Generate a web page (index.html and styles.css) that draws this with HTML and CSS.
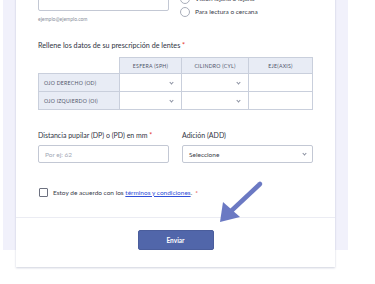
FILE: index.html
```html
<!DOCTYPE html>
<html lang="es">
<head>
  <meta charset="UTF-8" />
  <meta name="viewport" content="width=device-width, initial-scale=1.0" />
  <title>Formulario de lentes</title>
  <link rel="stylesheet" href="styles.css">
</head>
<body>
  <div class="page">
    <div class="page-inner">
      <form class="card">

        <!-- Email + tipo de visión -->
        <div class="two-col">
          <div class="field">
            <label class="field-label">Correo electrónico <span class="req">*</span></label>
            <input class="text-input" type="text">
            <div class="hint">ejemplo@ejemplo.com</div>
          </div>
          <div class="field">
            <label class="field-label">Tipo de visión <span class="req">*</span></label>
            <div class="radio-list">
              <label class="radio"><span class="radio-dot"></span>Visión lejana o lejana</label>
              <label class="radio"><span class="radio-dot"></span>Para lectura o cercana</label>
            </div>
          </div>
        </div>

        <!-- Prescripción -->
        <div class="section-label">Rellene los datos de su prescripción de lentes <span class="req">*</span></div>
        <table class="rx-table">
          <thead>
            <tr>
              <th class="blank"></th>
              <th>Esfera (SPH)</th>
              <th>Cilindro (CYL)</th>
              <th>Eje(axis)</th>
            </tr>
          </thead>
          <tbody>
            <tr>
              <th>Ojo derecho (OD)</th>
              <td class="sel"><span class="chev"></span></td>
              <td class="sel"><span class="chev"></span></td>
              <td></td>
            </tr>
            <tr>
              <th>Ojo izquierdo (OI)</th>
              <td class="sel"><span class="chev"></span></td>
              <td class="sel"><span class="chev"></span></td>
              <td></td>
            </tr>
          </tbody>
        </table>

        <!-- DP + ADD -->
        <div class="two-col row-dp">
          <div class="field">
            <label class="field-label">Distancia pupilar (DP) o (PD) en mm <span class="req">*</span></label>
            <div class="text-input placeholder">Por ej: 62</div>
          </div>
          <div class="field">
            <label class="field-label">Adición (ADD)</label>
            <div class="text-input select">Seleccione<span class="chev"></span></div>
          </div>
        </div>

        <!-- Terms -->
        <label class="terms">
          <span class="checkbox"></span>
          Estoy de acuerdo con los&nbsp;<a href="#">términos y condiciones</a>. <span class="req">*</span>
        </label>

        <div class="card-footer">
          <button type="button" class="btn-send">Enviar</button>
        </div>

        <!-- pointer arrow -->
        <svg class="pointer" width="60" height="50" viewBox="0 0 60 50">
          <line x1="55" y1="4" x2="24" y2="33" stroke="#6b79c3" stroke-width="4.5" stroke-linecap="round"/>
          <polygon points="15,42 18,22 35,37" fill="#6b79c3"/>
        </svg>
      </form>
    </div>
  </div>
</body>
</html>
```

FILE: styles.css
```css
* {
  box-sizing: border-box;
  margin: 0;
  padding: 0;
}

html, body {
  height: 100%;
  background: #ffffff;
  font-family: "Lato", "Open Sans", sans-serif;
  color: #3a3d4a;
  overflow: hidden;
}

.page {
  height: 100%;
  padding-left: 3px;
  width: 348px;
}

.page-inner {
  height: 100%;
  background: #f1f1fb;
  padding: 0 13px;
}

.card {
  position: relative;
  background: #ffffff;
  margin-top: -34px;
  padding: 10px 22px 0;
  box-shadow: 0 1px 2px rgba(60, 70, 120, 0.25);
}

.two-col {
  display: grid;
  grid-template-columns: 131px 131px;
  column-gap: 13px;
}

.field-label {
  display: block;
  font-size: 7px;
  line-height: 12px;
  color: #2f3342;
}

.req {
  color: #e3342f;
}

.text-input {
  display: flex;
  align-items: center;
  width: 100%;
  height: 18px;
  margin-top: 5px;
  border: 1px solid #c3c8d4;
  border-radius: 2px;
  background: #fff;
  padding: 0 6px;
  font-family: inherit;
  font-size: 6.5px;
  color: #3a3d4a;
}

.placeholder {
  color: #a3a8b5;
}

.select {
  justify-content: space-between;
}

.hint {
  margin-top: 5px;
  font-size: 5px;
  line-height: 6px;
  color: #8a8f9c;
}

.radio-list {
  margin-top: 4px;
}

.radio {
  display: flex;
  align-items: center;
  gap: 5px;
  height: 13px;
  margin-left: -2px;
  font-size: 6.5px;
  color: #3a3d4a;
}

.radio-dot {
  width: 10px;
  height: 10px;
  border: 1px solid #a9aeba;
  border-radius: 50%;
}

.section-label {
  margin-top: 19px;
  font-size: 7.2px;
  line-height: 10px;
  color: #2f3342;
}

.rx-table {
  margin-top: 6px;
  width: 275px;
  border-collapse: collapse;
  table-layout: fixed;
  font-size: 5.2px;
  text-transform: uppercase;
  letter-spacing: 0.25px;
}

.rx-table th,
.rx-table td {
  border: 1px solid #c9cfdc;
  height: 18px;
}

.rx-table thead th {
  height: 16px;
  background: #e8ecf5;
  color: #50566a;
  font-weight: 400;
  text-align: center;
}

.rx-table th:nth-child(1) { width: 81px; }
.rx-table th:nth-child(2) { width: 62px; }
.rx-table th:nth-child(3) { width: 67px; }

.rx-table thead th.blank {
  background: #fff;
  border-top-color: #fff;
  border-left-color: #fff;
}

.rx-table tbody th {
  background: #e8ecf5;
  color: #50566a;
  font-weight: 400;
  text-align: left;
  padding-left: 5px;
}

.rx-table td.sel {
  text-align: right;
  padding-right: 8px;
}

.chev {
  display: inline-block;
  width: 3px;
  height: 3px;
  border-right: 1px solid #8b90a0;
  border-bottom: 1px solid #8b90a0;
  transform: rotate(45deg);
  margin-bottom: 1px;
}

.row-dp {
  margin-top: 20px;
}

.row-dp .field-label {
  line-height: 10px;
}

.terms {
  display: flex;
  align-items: center;
  height: 10px;
  margin-top: 24px;
  font-size: 6.5px;
  color: #3a3d4a;
}

.checkbox {
  width: 9px;
  height: 9px;
  margin: 0 5px 0 1px;
  border: 1px solid #6d7180;
  border-radius: 1px;
}

.terms a {
  color: #2f4fd8;
  text-decoration: underline;
}

.terms .req {
  margin-left: 3px;
}

.card-footer {
  margin: 20px -22px 0;
  border-top: 1px solid #ebecf3;
  padding: 12px 0 17px;
  display: flex;
  justify-content: center;
}

.btn-send {
  width: 76px;
  height: 20px;
  background: #5166aa;
  color: #ffffff;
  border: 1px solid #4a5d9c;
  border-radius: 2px;
  font-family: inherit;
  font-size: 6.5px;
  font-weight: 700;
}

.pointer {
  position: absolute;
  left: 189px;
  top: 214px;
}
```
